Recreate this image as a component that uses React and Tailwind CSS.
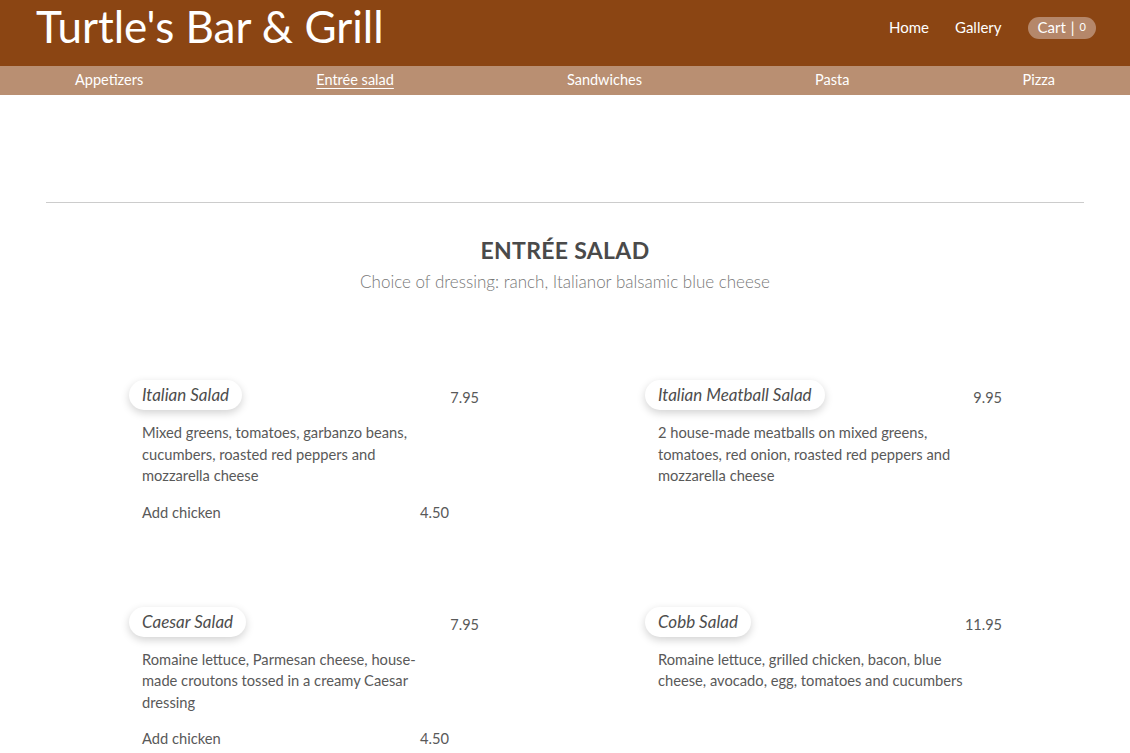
import React from "react";

const font = { fontFamily: "Lato, 'Open Sans', 'Noto Sans', sans-serif" };

function Item({ name, price, lines, extra, width }) {
  return (
    <div className={width}>
      <div className="flex items-start justify-between">
        <div className="h-[30px] px-[13px] flex items-center rounded-full bg-white shadow-[0_3px_8px_rgba(0,0,0,0.18)] text-[17px] italic text-[#4d4d4d]">
          {name}
        </div>
        <div className="pt-[7px] text-[14.5px] text-[#595959]">{price}</div>
      </div>
      <div className="pl-[13px] mt-[12px] text-[14.7px] leading-[21.5px] text-[#595959]">
        {lines.map((l, i) => (
          <div key={i} className="whitespace-nowrap">{l}</div>
        ))}
      </div>
      {extra && (
        <div className="pl-[13px] mt-[14px] w-[320px] flex justify-between text-[14.7px] text-[#595959]">
          <span>{extra[0]}</span>
          <span>{extra[1]}</span>
        </div>
      )}
    </div>
  );
}

export default function App() {
  return (
    <div style={font} className="min-h-[753px] bg-white">
      <header className="h-[66px] bg-[#8B4513] flex items-center justify-between pl-[36px] pr-[34px]">
        <div className="text-white text-[44px] leading-none -mt-[14px]">Turtle's Bar &amp; Grill</div>
        <nav className="flex items-center text-white text-[15px] -mt-[11px]">
          <a className="mr-[26px]">Home</a>
          <a className="mr-[26px]">Gallery</a>
          <span className="flex items-center h-[22px] px-[10px] rounded-full bg-[#b5876a]">
            Cart <span className="mx-[5px]">|</span> <span className="text-[11px]">0</span>
          </span>
        </nav>
      </header>
      <div className="h-[29px] bg-[#b98f72] flex items-center justify-between px-[75px] text-white text-[14.5px]">
        <a className="-mt-[2px]">Appetizers</a>
        <a className="-mt-[2px] underline underline-offset-[3px]">Entrée salad</a>
        <a className="-mt-[2px]">Sandwiches</a>
        <a className="-mt-[2px]">Pasta</a>
        <a className="-mt-[2px]">Pizza</a>
      </div>
      <main>
        <div className="mx-[46px] mt-[107px] border-t border-[#cccccc]" />
        <div className="text-center mt-[30px]">
          <h2 className="text-[23px] font-bold text-[#4a4a4a] tracking-[0.3px]">ENTRÉE SALAD</h2>
          <p className="mt-[1px] text-[17px] font-light text-[#777777]">
            Choice of dressing: ranch, Italianor balsamic blue cheese
          </p>
        </div>
        <div className="grid grid-cols-[516px_500px] pl-[129px] mt-[86px] gap-y-[84px]">
          <Item
            width="w-[350px]"
            name="Italian Salad"
            price="7.95"
            lines={["Mixed greens, tomatoes, garbanzo beans,", "cucumbers, roasted red peppers and", "mozzarella cheese"]}
            extra={["Add chicken", "4.50"]}
          />
          <Item
            width="w-[357px]"
            name="Italian Meatball Salad"
            price="9.95"
            lines={["2 house-made meatballs on mixed greens,", "tomatoes, red onion, roasted red peppers and", "mozzarella cheese"]}
          />
          <Item
            width="w-[350px]"
            name="Caesar Salad"
            price="7.95"
            lines={["Romaine lettuce, Parmesan cheese, house-", "made croutons tossed in a creamy Caesar", "dressing"]}
            extra={["Add chicken", "4.50"]}
          />
          <Item
            width="w-[357px]"
            name="Cobb Salad"
            price="11.95"
            lines={["Romaine lettuce, grilled chicken, bacon, blue", "cheese, avocado, egg, tomatoes and cucumbers"]}
          />
        </div>
      </main>
    </div>
  );
}
